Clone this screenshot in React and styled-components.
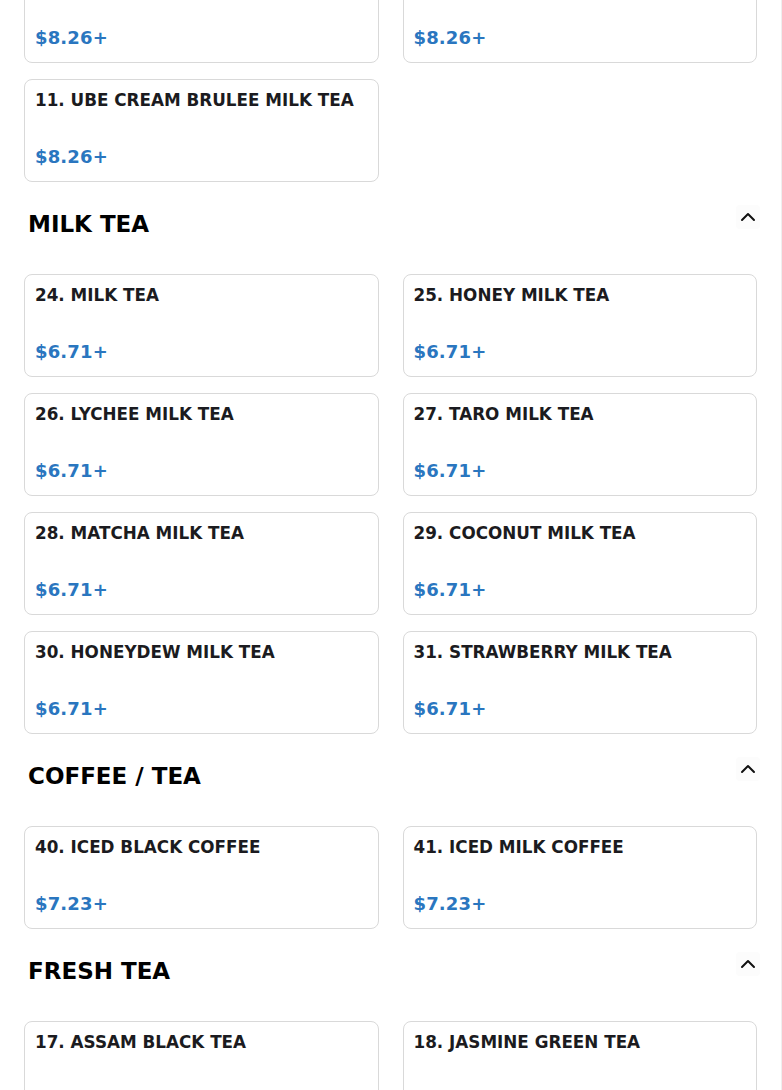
import React from "react";
import styled, { createGlobalStyle } from "styled-components";
import { ChevronUp } from "lucide-react";

const sections = [
  {
    title: "SPECIALTY",
    items: [
      { name: "9. BROWN SUGAR CREAM BRULEE", price: "$8.26+" },
      { name: "10. MATCHA CREAM BRULEE", price: "$8.26+" },
      { name: "11. UBE CREAM BRULEE MILK TEA", price: "$8.26+" },
    ],
    hideHeader: true,
  },
  {
    title: "MILK TEA",
    items: [
      { name: "24. MILK TEA", price: "$6.71+" },
      { name: "25. HONEY MILK TEA", price: "$6.71+" },
      { name: "26. LYCHEE MILK TEA", price: "$6.71+" },
      { name: "27. TARO MILK TEA", price: "$6.71+" },
      { name: "28. MATCHA MILK TEA", price: "$6.71+" },
      { name: "29. COCONUT MILK TEA", price: "$6.71+" },
      { name: "30. HONEYDEW MILK TEA", price: "$6.71+" },
      { name: "31. STRAWBERRY MILK TEA", price: "$6.71+" },
    ],
  },
  {
    title: "COFFEE / TEA",
    items: [
      { name: "40. ICED BLACK COFFEE", price: "$7.23+" },
      { name: "41. ICED MILK COFFEE", price: "$7.23+" },
    ],
  },
  {
    title: "FRESH TEA",
    items: [
      { name: "17. ASSAM BLACK TEA", price: "$5.99+" },
      { name: "18. JASMINE GREEN TEA", price: "$5.99+" },
    ],
  },
];

const GlobalStyle = createGlobalStyle`
  html, body {
    margin: 0;
    background: #ffffff;
    font-family: "DejaVu Sans", "Liberation Sans", sans-serif;
    overflow: hidden;
  }
`;

const Page = styled.div`
  /* page is scrolled: the first row sits partly above the window */
  margin-top: -40px;
  padding: 0 24px;
  border-right: 1px solid #efefef;
  height: 1200px;
`;

const Section = styled.section`
  & + & {
    margin-top: 24px;
  }
`;

const SectionHeader = styled.div`
  display: flex;
  justify-content: space-between;
  align-items: flex-start;
  padding-left: 4px;
  margin-bottom: 32px;
`;

const SectionTitle = styled.h2`
  margin: 0;
  font-size: 23px;
  line-height: 36px;
  font-weight: 700;
  color: #000;
`;

const CollapseButton = styled.button`
  width: 24px;
  height: 24px;
  padding: 0;
  margin: -1px -3px 0 0;
  border: none;
  border-radius: 4px;
  background: #fcfcfc;
  color: #111;
  display: flex;
  align-items: center;
  justify-content: center;
  cursor: pointer;
`;

const Grid = styled.div`
  display: grid;
  grid-template-columns: 1fr 1fr;
  column-gap: 24px;
  row-gap: 16px;
`;

const Card = styled.div`
  box-sizing: border-box;
  height: 103px;
  padding: 8px 10px 12px;
  border: 1px solid #d9d9d9;
  border-radius: 8px;
  display: flex;
  flex-direction: column;
  justify-content: space-between;
  background: #fff;
`;

const ItemName = styled.div`
  font-size: 16.8px;
  line-height: 24px;
  font-weight: 700;
  color: #1b1b20;
`;

const Price = styled.div`
  font-size: 18px;
  line-height: 24px;
  font-weight: 700;
  color: #2a76bf;
  letter-spacing: 0.15px;
`;

export default function App() {
  return (
    <>
      <GlobalStyle />
      <Page>
        {sections.map((section) => (
          <Section key={section.title}>
            {!section.hideHeader && (
              <SectionHeader>
                <SectionTitle>{section.title}</SectionTitle>
                <CollapseButton aria-label="Collapse">
                  <ChevronUp size={24} strokeWidth={2} />
                </CollapseButton>
              </SectionHeader>
            )}
            <Grid>
              {section.items.map((item) => (
                <Card key={item.name}>
                  <ItemName>{item.name}</ItemName>
                  <Price>{item.price}</Price>
                </Card>
              ))}
            </Grid>
          </Section>
        ))}
      </Page>
    </>
  );
}
